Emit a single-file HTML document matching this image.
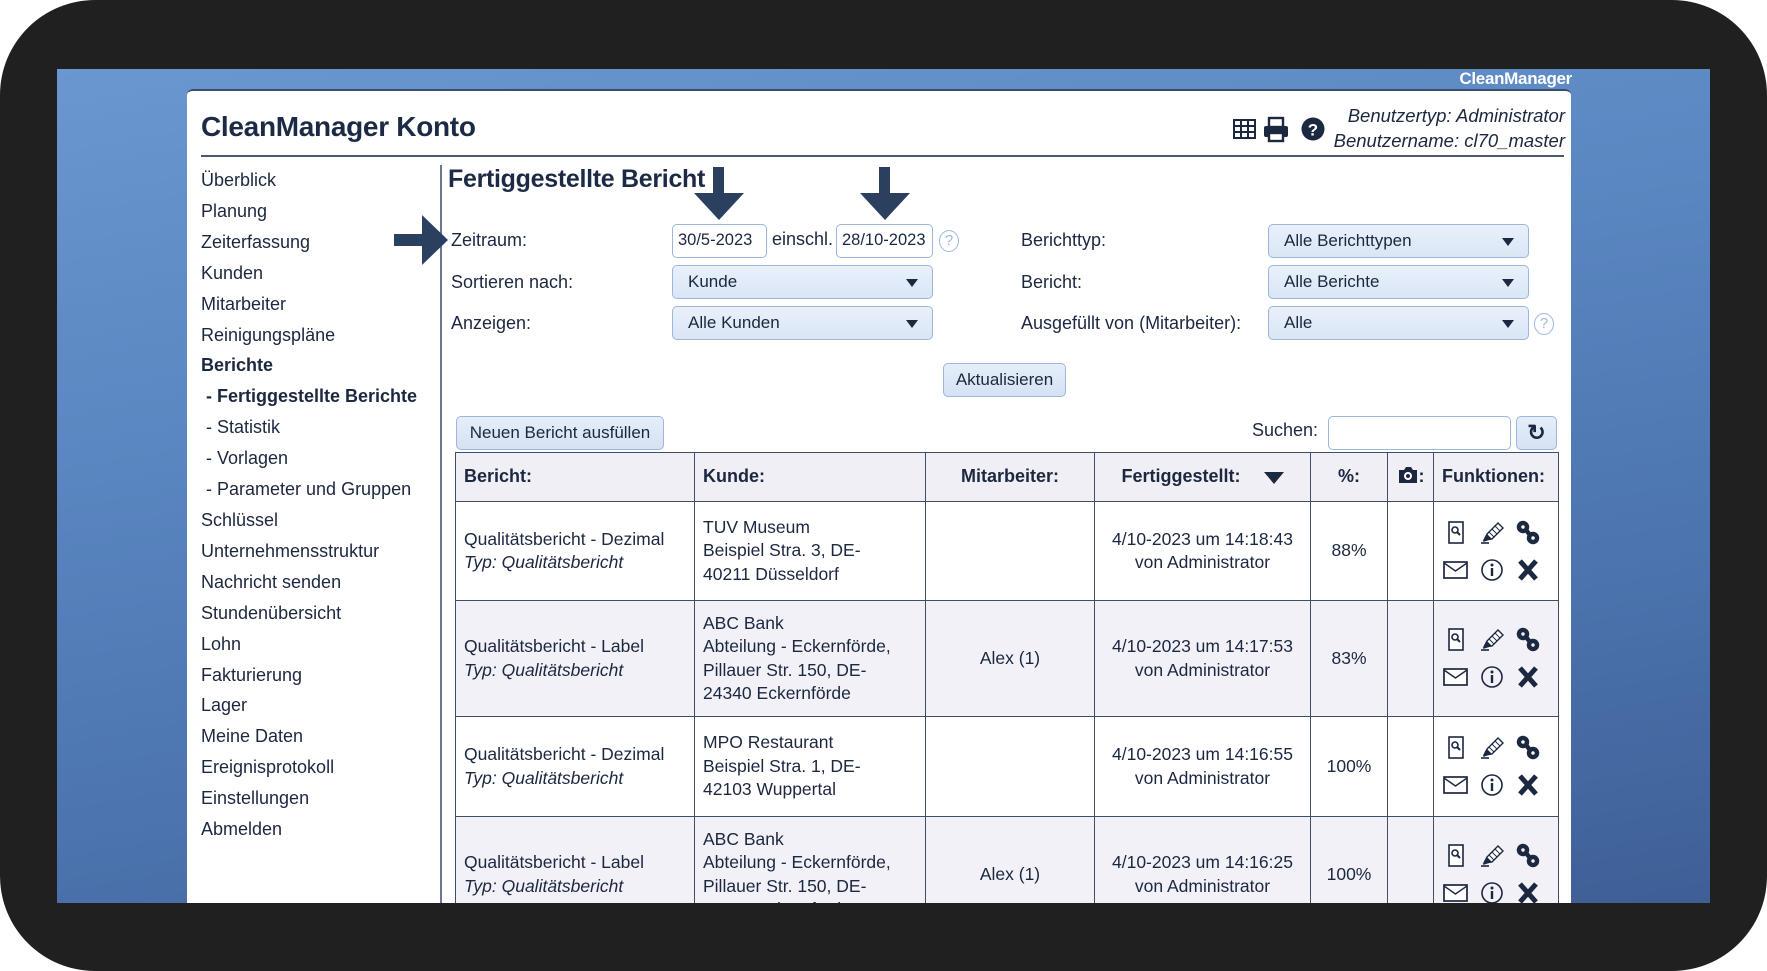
<!DOCTYPE html>
<html><head><meta charset="utf-8">
<style>
*{margin:0;padding:0;box-sizing:border-box}
body{width:1767px;height:971px;background:#fff;position:relative;overflow:hidden;font-family:"Liberation Sans",Arial,sans-serif;color:#1c2740}
.frame{position:absolute;left:0;top:0;width:1767px;height:971px;background:#212021;border-radius:95px}
.blue{position:absolute;left:57px;top:69px;width:1653px;height:834px;background:linear-gradient(170deg,#6a97cf 0%,#5a86c1 35%,#4d76b0 65%,#3e5f96 100%);overflow:hidden}
.cm{position:absolute;right:138px;top:0px;color:#fff;font-weight:bold;font-size:17px;letter-spacing:-0.3px}
.panel{position:absolute;left:130px;top:20px;width:1384px;height:830px;background:#fff;border-radius:6px 6px 0 0;border-top:2px solid #3b4d6e}
.abs{position:absolute}
.title{left:14px;top:20px;font-size:28px;font-weight:bold;color:#1c2a45;letter-spacing:-0.3px}
.hline{left:14px;top:64px;width:1363px;height:2px;background:#4a5870}
.user{right:6px;top:12px;text-align:right;font-style:italic;font-size:18.5px;line-height:25px;color:#1c2740}
.side{left:14px;top:74px;font-size:18px;line-height:30.9px;color:#1c2740}
.side b{font-weight:bold}
.vsep{left:253px;top:74px;width:2px;height:760px;background:#6b7890}
.h2{left:261px;top:74px;font-size:25px;font-weight:bold;color:#1c2a45;letter-spacing:-0.3px}
.lbl{font-size:18px;color:#1c2740;white-space:nowrap}
.inp{background:#fff;border:1px solid #9db7dc;border-radius:5px;font-size:16.5px;padding:6px 5px;height:34px;white-space:nowrap;overflow:hidden}
.sel{background:linear-gradient(#e9f0fa,#dae6f6);border:1px solid #9db7dc;border-radius:5px;font-size:17px;padding:6px 15px;height:34px}
.sel:after{content:"";position:absolute;right:14px;top:13px;border-left:6px solid transparent;border-right:6px solid transparent;border-top:8px solid #1c2740}
.btn{background:linear-gradient(#e6eef9,#d5e2f3);border:1px solid #9db7dc;border-radius:5px;font-size:17px;text-align:center;line-height:32px;height:34px}
.help{width:20px;height:22px;border:1.5px solid #9db7dc;border-radius:50%;color:#9db7dc;font-size:15px;text-align:center;line-height:19px}
table{position:absolute;left:268px;top:361px;border-collapse:collapse;font-size:17.5px;color:#1c2740}
td,th{border:1.5px solid #3e4d68;padding:0 8px;line-height:23.5px}
th{background:#efeff5;height:49px;font-weight:bold;text-align:left;font-size:18px}
tr.g td{background:#f1f1f7}
.c{text-align:center}
.ic{display:grid;grid-template-columns:36px 36px 36px;row-gap:11px;justify-content:center}
.ic svg{width:28px;height:26px}
</style></head><body>
<div class="frame"></div>
<div class="blue">
<div class="cm abs">CleanManager</div>
<div class="panel">
 <div class="abs title">CleanManager Konto</div>
 <svg class="abs" style="left:1044px;top:24px" width="104" height="30" viewBox="0 0 104 30">
  <g fill="none" stroke="#1c2740" stroke-width="2"><rect x="3" y="5" width="21" height="18"/><path d="M3 11h21M3 17h21M10 5v18M17 5v18"/></g>
  <g fill="#1c2740"><rect x="38" y="3" width="14" height="9" fill="none" stroke="#1c2740" stroke-width="2.4"/><rect x="33" y="11" width="24" height="11" rx="2"/><rect x="38" y="18" width="14" height="8" fill="#fff" stroke="#1c2740" stroke-width="2.4"/></g>
  <circle cx="82" cy="14" r="11.5" fill="#1c2740"/><text x="82" y="20.5" text-anchor="middle" font-size="17" font-weight="bold" fill="#fff" font-family="Liberation Sans">?</text>
 </svg>
 <div class="abs user">Benutzertyp: Administrator<br>Benutzername: cl70_master</div>
 <div class="abs hline"></div>
 <div class="abs side">Überblick<br>Planung<br>Zeiterfassung<br>Kunden<br>Mitarbeiter<br>Reinigungspläne<br><b>Berichte</b><br><b>&nbsp;- Fertiggestellte Berichte</b><br>&nbsp;- Statistik<br>&nbsp;- Vorlagen<br>&nbsp;- Parameter und Gruppen<br>Schlüssel<br>Unternehmensstruktur<br>Nachricht senden<br>Stundenübersicht<br>Lohn<br>Fakturierung<br>Lager<br>Meine Daten<br>Ereignisprotokoll<br>Einstellungen<br>Abmelden</div>
 <div class="abs vsep"></div>
 <div class="abs h2">Fertiggestellte Bericht</div>
 <!-- arrows -->
 <svg class="abs" style="left:504px;top:76px" width="56" height="54"><rect x="22" y="0" width="11" height="28" fill="#2b3f5e"/><polygon points="3,26 53,26 28,53" fill="#2b3f5e"/></svg>
 <svg class="abs" style="left:670px;top:76px" width="56" height="54"><rect x="22" y="0" width="11" height="28" fill="#2b3f5e"/><polygon points="3,26 53,26 28,53" fill="#2b3f5e"/></svg>
 <svg class="abs" style="left:207px;top:124px" width="56" height="52"><rect x="0" y="19" width="30" height="12" fill="#2b3f5e"/><polygon points="28,0 54,25 28,50" fill="#2b3f5e"/></svg>
 <!-- form -->
 <div class="abs lbl" style="left:264px;top:139px">Zeitraum:</div>
 <div class="abs inp" style="left:485px;top:133px;width:95px">30/5-2023</div>
 <div class="abs lbl" style="left:585px;top:138px">einschl.</div>
 <div class="abs inp" style="left:649px;top:133px;width:97px">28/10-2023</div>
 <div class="abs help" style="left:752px;top:139px">?</div>
 <div class="abs lbl" style="left:264px;top:181px">Sortieren nach:</div>
 <div class="abs sel" style="left:485px;top:174px;width:261px">Kunde</div>
 <div class="abs lbl" style="left:264px;top:222px">Anzeigen:</div>
 <div class="abs sel" style="left:485px;top:215px;width:261px">Alle Kunden</div>
 <div class="abs lbl" style="left:834px;top:139px">Berichttyp:</div>
 <div class="abs sel" style="left:1081px;top:133px;width:261px">Alle Berichttypen</div>
 <div class="abs lbl" style="left:834px;top:181px">Bericht:</div>
 <div class="abs sel" style="left:1081px;top:174px;width:261px">Alle Berichte</div>
 <div class="abs lbl" style="left:834px;top:222px">Ausgefüllt von (Mitarbeiter):</div>
 <div class="abs sel" style="left:1081px;top:215px;width:261px">Alle</div>
 <div class="abs help" style="left:1347px;top:222px">?</div>
 <div class="abs btn" style="left:756px;top:272px;width:123px">Aktualisieren</div>
 <div class="abs btn" style="left:269px;top:325px;width:208px">Neuen Bericht ausfüllen</div>
 <div class="abs lbl" style="left:1065px;top:329px">Suchen:</div>
 <div class="abs inp" style="left:1141px;top:325px;width:183px"></div>
 <div class="abs btn" style="left:1329px;top:325px;width:41px;font-size:22px;font-weight:bold">&#x21BB;</div>
 <table>
  <colgroup><col style="width:239px"><col style="width:231px"><col style="width:169px"><col style="width:216px"><col style="width:77px"><col style="width:46px"><col style="width:123px"></colgroup>
  <tr><th>Bericht:</th><th>Kunde:</th><th class="c">Mitarbeiter:</th><th class="c">Fertiggestellt: <span style="display:inline-block;margin-left:18px;border-left:10px solid transparent;border-right:10px solid transparent;border-top:12px solid #1c2740;vertical-align:middle"></span></th><th class="c">%:</th><th class="c" style="padding:0 2px">
   <svg width="22" height="18" viewBox="0 0 22 18" style="vertical-align:-2px"><path d="M2 4h5l2-3h5l2 3h4v13H2z" fill="#1c2740"/><circle cx="11" cy="10" r="4" fill="#fff"/><circle cx="11" cy="10" r="2" fill="#1c2740"/></svg>:</th><th>Funktionen:</th></tr>
  <tr style="height:99px"><td>Qualitätsbericht - Dezimal<br><i>Typ: Qualitätsbericht</i></td><td>TUV Museum<br>Beispiel Stra. 3, DE-<br>40211 Düsseldorf</td><td class="c"></td><td class="c">4/10-2023 um 14:18:43<br>von Administrator</td><td class="c">88%</td><td></td><td><div class="ic">ICONS</div></td></tr>
  <tr class="g" style="height:116px"><td>Qualitätsbericht - Label<br><i>Typ: Qualitätsbericht</i></td><td>ABC Bank<br>Abteilung - Eckernförde,<br>Pillauer Str. 150, DE-<br>24340 Eckernförde</td><td class="c">Alex (1)</td><td class="c">4/10-2023 um 14:17:53<br>von Administrator</td><td class="c">83%</td><td></td><td><div class="ic">ICONS</div></td></tr>
  <tr style="height:100px"><td>Qualitätsbericht - Dezimal<br><i>Typ: Qualitätsbericht</i></td><td>MPO Restaurant<br>Beispiel Stra. 1, DE-<br>42103 Wuppertal</td><td class="c"></td><td class="c">4/10-2023 um 14:16:55<br>von Administrator</td><td class="c">100%</td><td></td><td><div class="ic">ICONS</div></td></tr>
  <tr class="g" style="height:116px"><td>Qualitätsbericht - Label<br><i>Typ: Qualitätsbericht</i></td><td>ABC Bank<br>Abteilung - Eckernförde,<br>Pillauer Str. 150, DE-<br>24340 Eckernförde</td><td class="c">Alex (1)</td><td class="c">4/10-2023 um 14:16:25<br>von Administrator</td><td class="c">100%</td><td></td><td><div class="ic">ICONS</div></td></tr>
 </table>
</div>
</div>
<script>
var I='<svg viewBox="0 0 28 26"><rect x="7" y="2" width="14" height="21" fill="#fff" stroke="#1c2740" stroke-width="1.6"/><circle cx="13" cy="10" r="3" fill="none" stroke="#1c2740" stroke-width="1.6"/><path d="M15 12l3 3" stroke="#1c2740" stroke-width="2"/></svg>'+
'<svg viewBox="0 0 28 26"><path d="M6 20l3-6 11-11 5 5-11 11z" fill="#fff" stroke="#1c2740" stroke-width="1.4"/><path d="M11 12l5 5M14 9l5 5M17 6l5 5" stroke="#1c2740" stroke-width="0.9"/><path d="M3 23h8" stroke="#1c2740" stroke-width="1.6"/><path d="M5 22l4-8 5 5z" fill="#1c2740"/></svg>'+
'<svg viewBox="0 0 28 26"><g fill="none" stroke="#1c2740" stroke-width="4.5"><circle cx="9" cy="7" r="4"/><circle cx="19" cy="18" r="4"/><path d="M12 10l4 5"/></g></svg>'+
'<svg viewBox="0 0 28 26"><rect x="2" y="5" width="23" height="16" fill="#fff" stroke="#1c2740" stroke-width="1.7"/><path d="M2 6l11.5 8L25 6" fill="none" stroke="#1c2740" stroke-width="1.4"/></svg>'+
'<svg viewBox="0 0 28 26"><circle cx="14" cy="13" r="10" fill="none" stroke="#1c2740" stroke-width="1.6"/><circle cx="14" cy="8" r="1.5" fill="#1c2740"/><path d="M14 11v8" stroke="#1c2740" stroke-width="2.4"/></svg>'+
'<svg viewBox="0 0 28 26"><path d="M6 4l16 18M22 4L6 22" stroke="#1c2740" stroke-width="5"/></svg>';
document.querySelectorAll('.ic').forEach(function(e){e.innerHTML=I});
</script>
</body></html>
